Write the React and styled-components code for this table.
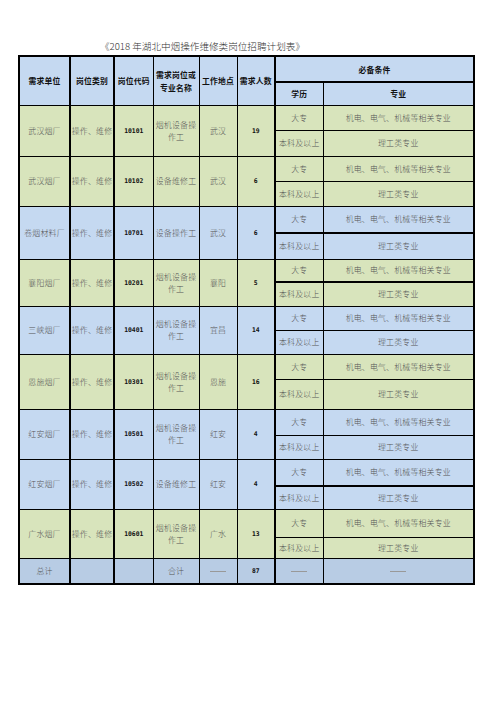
import React from "react";
import styled, { createGlobalStyle } from "styled-components";

const Global = createGlobalStyle`
  html, body { margin: 0; padding: 0; background: #fff; }
  body { font-family: "Noto Sans CJK SC", "Liberation Serif", serif; }
`;

const Page = styled.div`
  width: 496px;
  height: 702px;
  padding: 40px 0 0 18px;
  box-sizing: border-box;
`;

const Title = styled.div`
  padding-left: 82px;
  font-size: 9.6px;
  line-height: 12px;
  color: #333;
  font-family: "Noto Sans CJK SC", sans-serif;
  font-weight: 300;
  height: 15px;
`;

const Table = styled.table`
  border-collapse: collapse;
  table-layout: fixed;
  width: 455px;
  border: 2px solid #000;
`;

const Row = styled.tr`
  height: ${(p) => p.$h}px;
`;

const Cell = styled.td`
  padding: 0;
  text-align: center;
  vertical-align: middle;
  background: ${(p) => p.$bg};
  border-top: ${(p) => p.$bt || 1}px solid #000;
  border-bottom: ${(p) => p.$bb || 1}px solid #000;
  border-left: ${(p) => p.$bl || 1}px solid #000;
  border-right: ${(p) => p.$br || 1}px solid #000;
  font-size: 7.9px;
  line-height: 12px;
  color: #555;
  font-weight: 300;
  white-space: ${(p) => (p.$wrap ? "normal" : "nowrap")};
  overflow: visible;
  letter-spacing: 0.2px;
`;

const HeadCell = styled(Cell)`
  color: #111;
  font-weight: 700;
  font-size: 7.8px;
  line-height: 13px;
`;

const CodeCell = styled(Cell)`
  font-family: "DejaVu Sans Mono", monospace;
  font-weight: 700;
  font-size: 6.4px;
  color: #111;
  letter-spacing: 0;
`;

const Dash = styled.span`
  display: inline-block;
  width: 16px;
  border-top: 1px solid #999;
  vertical-align: middle;
`;

const GREEN = "#d8e4bc";
const BLUE = "#c5d9f1";
const HEAD = "#c5d9f1";
const TOTAL = "#b8cce4";

const units = [
  { unit: "武汉烟厂", code: "10101", job: "烟机设备操作工", place: "武汉", n: "19", bg: GREEN, h: [25, 26] },
  { unit: "武汉烟厂", code: "10102", job: "设备维修工", place: "武汉", n: "6", bg: GREEN, h: [25, 25] },
  { unit: "卷烟材料厂", code: "10701", job: "设备操作工", place: "武汉", n: "6", bg: BLUE, h: [27, 26], split: 2 },
  { unit: "襄阳烟厂", code: "10201", job: "烟机设备操作工", place: "襄阳", n: "5", bg: GREEN, h: [23, 24], split: 2 },
  { unit: "三峡烟厂", code: "10401", job: "烟机设备操作工", place: "宜昌", n: "14", bg: BLUE, h: [24, 24] },
  { unit: "恩施烟厂", code: "10301", job: "烟机设备操作工", place: "恩施", n: "16", bg: GREEN, h: [25, 30] },
  { unit: "红安烟厂", code: "10501", job: "烟机设备操作工", place: "红安", n: "4", bg: BLUE, h: [26, 24] },
  { unit: "红安烟厂", code: "10502", job: "设备维修工", place: "红安", n: "4", bg: BLUE, h: [27, 23], split: 2 },
  { unit: "广水烟厂", code: "10601", job: "烟机设备操作工", place: "广水", n: "13", bg: GREEN, h: [28, 21] },
];

function Unit({ u }) {
  return (
    <>
      <Row $h={u.h[0]}>
        <Cell rowSpan={2} $bg={u.bg} $br={2}>{u.unit}</Cell>
        <Cell rowSpan={2} $bg={u.bg} $br={2}>操作、维修</Cell>
        <CodeCell rowSpan={2} $bg={u.bg}>{u.code}</CodeCell>
        <Cell rowSpan={2} $bg={u.bg} $wrap>{u.job}</Cell>
        <Cell rowSpan={2} $bg={u.bg}>{u.place}</Cell>
        <CodeCell rowSpan={2} $bg={u.bg} $br={2}>{u.n}</CodeCell>
        <Cell $bg={u.bg} $bb={u.split || 1}>大专</Cell>
        <Cell $bg={u.bg} $bb={u.split || 1}>机电、电气、机械等相关专业</Cell>
      </Row>
      <Row $h={u.h[1]}>
        <Cell $bg={u.bg}>本科及以上</Cell>
        <Cell $bg={u.bg}>理工类专业</Cell>
      </Row>
    </>
  );
}

export default function App() {
  return (
    <Page>
      <Global />
      <Title>《2018 年湖北中烟操作维修类岗位招聘计划表》</Title>
      <Table>
        <colgroup>
          <col style={{ width: 51 }} />
          <col style={{ width: 44 }} />
          <col style={{ width: 39 }} />
          <col style={{ width: 46 }} />
          <col style={{ width: 38 }} />
          <col style={{ width: 38 }} />
          <col style={{ width: 48 }} />
          <col style={{ width: 151 }} />
        </colgroup>
        <tbody>
          <Row $h={26}>
            <HeadCell rowSpan={2} $bg={HEAD} $br={2}>需求单位</HeadCell>
            <HeadCell rowSpan={2} $bg={HEAD} $br={2}>岗位类别</HeadCell>
            <HeadCell rowSpan={2} $bg={HEAD}>岗位代码</HeadCell>
            <HeadCell rowSpan={2} $bg={HEAD} $wrap>需求岗位或专业名称</HeadCell>
            <HeadCell rowSpan={2} $bg={HEAD}>工作地点</HeadCell>
            <HeadCell rowSpan={2} $bg={HEAD} $br={2}>需求人数</HeadCell>
            <HeadCell colSpan={2} $bg={HEAD} $bb={2}>必备条件</HeadCell>
          </Row>
          <Row $h={23}>
            <HeadCell $bg={HEAD}>学历</HeadCell>
            <HeadCell $bg={HEAD}>专业</HeadCell>
          </Row>
          {units.map((u, i) => (
            <Unit key={i} u={u} />
          ))}
          <Row $h={26}>
            <Cell $bg={TOTAL} $br={2}>总计</Cell>
            <Cell $bg={TOTAL} $br={2}></Cell>
            <Cell $bg={TOTAL}></Cell>
            <Cell $bg={TOTAL}>合计</Cell>
            <Cell $bg={TOTAL}><Dash /></Cell>
            <CodeCell $bg={TOTAL} $br={2}>87</CodeCell>
            <Cell $bg={TOTAL}><Dash /></Cell>
            <Cell $bg={TOTAL}><Dash /></Cell>
          </Row>
        </tbody>
      </Table>
    </Page>
  );
}
